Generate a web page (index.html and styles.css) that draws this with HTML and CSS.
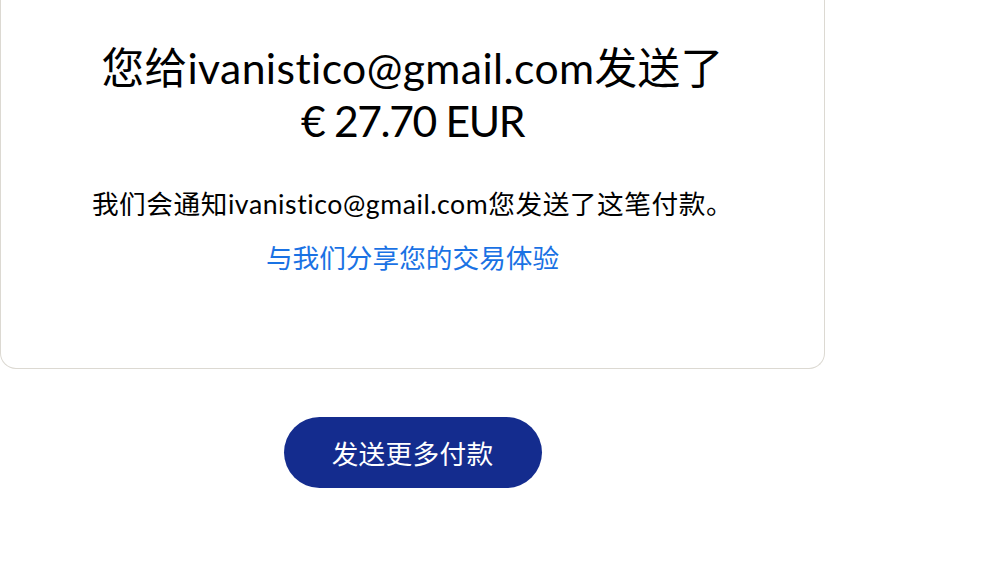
FILE: index.html
```html
<!DOCTYPE html>
<html lang="zh-CN">
<head>
    <meta charset="utf-8">
    <title>付款已发送</title>
    <link rel="stylesheet" href="styles.css">
</head>
<body>
    <div class="page">
        <div class="card">
            <h1 class="title">
                <span class="line">您给ivanistico@gmail.com发送了</span>
                <span class="line amount">€ 27.70 EUR</span>
            </h1>
            <p class="note">我们会通知ivanistico@gmail.com您发送了这笔付款。</p>
            <a href="javascript:;" class="share">与我们分享您的交易体验</a>
        </div>
        <div class="actions">
            <a href="javascript:;" class="btn">发送更多付款</a>
        </div>
    </div>
</body>
</html>
```

FILE: styles.css
```css
* {
    margin: 0;
    padding: 0;
    box-sizing: border-box;
}
body{
    background: #fff;
    font-family: Lato, "Noto Sans CJK SC", sans-serif;
    font-variant-ligatures: none;
    color: #000;
}
.page{
    width: 825px;
}
.card{
    border: 1px solid #dcd9d2;
    border-top: 0;
    border-radius: 0 0 16px 16px;
    padding: 41px 20px 90px;
    text-align: center;
}
.title{
    font-size: 42.67px;
    font-weight: 400;
    line-height: 53px;
    letter-spacing: 0.4px;
}
.line{
    display: block;
}
.amount{
    letter-spacing: -1.4px;
}
.note{
    margin-top: 37px;
    font-size: 26.67px;
    line-height: 40px;
    letter-spacing: 0.55px;
}
.share{
    display: inline-block;
    margin-top: 14px;
    font-size: 26.67px;
    line-height: 40px;
    color: #1a72e4;
    text-decoration: none;
}
.actions{
    display: flex;
    justify-content: center;
    padding-top: 48px;
}
.btn{
    display: flex;
    align-items: center;
    justify-content: center;
    width: 258px;
    height: 71px;
    border-radius: 36px;
    background: #142c8e;
    color: #fff;
    font-size: 26.67px;
    letter-spacing: 0.3px;
    text-decoration: none;
}
```
